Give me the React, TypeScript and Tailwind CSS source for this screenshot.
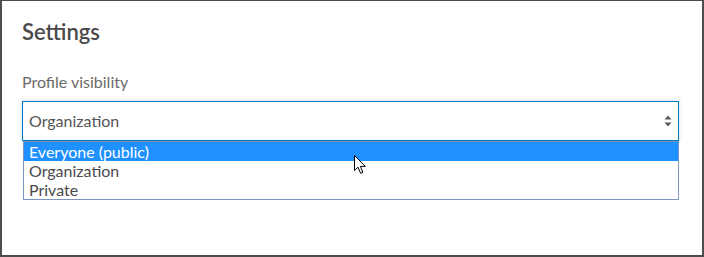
import React from 'react'

const options = ['Everyone (public)', 'Organization', 'Private']

function Arrows() {
  return (
    <svg width="8" height="12" viewBox="0 0 8 12" className="text-[#595959]">
      <path d="M4 0.5 L7.5 4.5 H0.5 Z" fill="currentColor" />
      <path d="M4 11.5 L7.5 7.5 H0.5 Z" fill="currentColor" />
    </svg>
  )
}

function Cursor() {
  return (
    <svg width="13" height="20" viewBox="0 0 13 20" className="absolute left-[352px] top-[154px]">
      <path
        d="M0.5 0.5 L0.5 15.5 L4 12.2 L6.6 18.3 L8.9 17.3 L6.4 11.4 L11.3 11.4 Z"
        fill="#fff"
        stroke="#000"
        strokeWidth="1"
        strokeLinejoin="round"
      />
    </svg>
  )
}

export default function App() {
  const selected = 'Organization'
  const hovered = 0

  return (
    <div
      className="relative w-[704px] h-[257px] bg-white border-t border-l-2 border-r-2 border-b-2 border-[#4c4c4c]"
      style={{ fontFamily: 'Lato, "Noto Sans", sans-serif' }}
    >
      <div className="pl-[20px] pr-[23px] pt-[18px]">
        <h1 className="text-[22px] leading-[26px] font-semibold text-[#4a4a4a]">Settings</h1>

        <label className="block mt-[27px] text-[16px] leading-[20px] text-[#6a6a6a]">Profile visibility</label>

        {/* Select */}
        <div className="mt-[9px] flex items-center justify-between h-[40px] px-[6px] border border-[#0079c1] shadow-[0_0_4px_rgba(0,121,193,0.25)]">
          <span className="text-[16px] text-[#555555]">{selected}</span>
          <Arrows />
        </div>

        {/* Open list */}
        <ul className="ml-[1px] border border-[#7f93c2] text-[16px] leading-[19px]">
          {options.map((o, i) => (
            <li
              key={o}
              className={
                i === hovered
                  ? 'h-[19px] pl-[5px] bg-[#1e90ff] text-white'
                  : 'h-[19px] pl-[5px] text-[#4a4a4a]'
              }
            >
              {o}
            </li>
          ))}
        </ul>
      </div>

      <Cursor />
    </div>
  )
}
